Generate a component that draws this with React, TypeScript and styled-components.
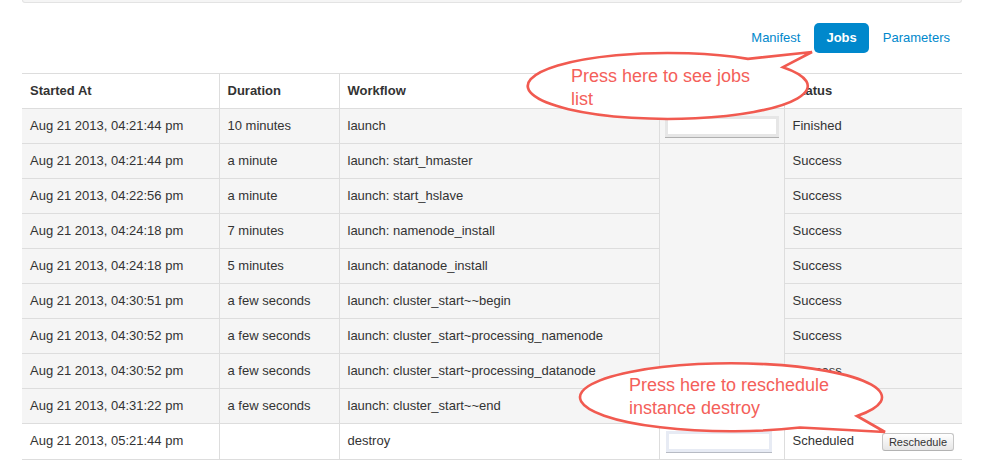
import styled, { createGlobalStyle } from "styled-components";

const GlobalStyle = createGlobalStyle`
  body {
    margin: 0;
    font-family: "Liberation Sans", Arial, sans-serif;
    font-size: 13px;
    color: #333333;
    background: #ffffff;
  }
`;

const Page = styled.div`
  position: relative;
  width: 986px;
  height: 468px;
  overflow: hidden;
`;

const Container = styled.div`
  width: 940px;
  margin-left: 22px;
`;

const Well = styled.div`
  height: 2px;
  background-color: #f5f5f5;
  border: 1px solid #e3e3e3;
  border-top: none;
  border-radius: 0 0 4px 4px;
`;

const Nav = styled.ul`
  display: flex;
  justify-content: flex-end;
  gap: 2px;
  list-style: none;
  margin: 20px 0 20px 0;
  padding: 0;
`;

const Pill = styled.li<{ $active?: boolean }>`
  padding: 6px 12px;
  line-height: 18px;
  border-radius: 5px;
  color: ${(p) => (p.$active ? "#ffffff" : "#0088cc")};
  background-color: ${(p) => (p.$active ? "#0088cc" : "transparent")};
  font-weight: ${(p) => (p.$active ? 700 : 400)};
  cursor: pointer;
`;

const Table = styled.table`
  width: 940px;
  table-layout: fixed;
  border-collapse: collapse;
  border-spacing: 0;
  border-bottom: 1px solid #dddddd;
`;

const Row = styled.tr<{ $shaded?: boolean }>`
  background-color: ${(p) => (p.$shaded ? "#f5f5f5" : "#ffffff")};
`;

const Th = styled.th`
  padding: 8px;
  line-height: 18px;
  text-align: left;
  font-weight: 700;
  border-top: 1px solid #dddddd;
  &:not(:first-child) {
    border-left: 1px solid #dddddd;
  }
`;

const Td = styled.td`
  padding: 8px;
  line-height: 18px;
  vertical-align: top;
  border-top: 1px solid #dddddd;
  white-space: nowrap;
  overflow: hidden;
  &:not(:first-child) {
    border-left: 1px solid #dddddd;
  }
`;

const ProgressCell = styled.td`
  padding: 7px 6px 5px 5px;
  vertical-align: top;
  border-top: 1px solid #dddddd;
  border-left: 1px solid #dddddd;
`;

const SpanCell = styled.td`
  border-top: 1px solid #dddddd;
  border-left: 1px solid #dddddd;
`;

const ProgressBox = styled.div<{ $tint?: "gray" | "blue" }>`
  box-sizing: border-box;
  width: ${(p) => (p.$tint === "blue" ? "106px" : "114px")};
  margin-left: ${(p) => (p.$tint === "blue" ? "1px" : "0")};
  height: 21px;
  background-color: #ffffff;
  border: 3px solid ${(p) => (p.$tint === "blue" ? "#e7ebf4" : "#e6e6e6")};
  box-shadow: 0 1px 0 ${(p) => (p.$tint === "blue" ? "#b7bbc4" : "#b0b0b0")};
`;

const RescheduleButton = styled.button`
  float: right;
  margin: 1px 0 0 0;
  padding: 2px 6px;
  font-family: "Liberation Sans", Arial, sans-serif;
  font-size: 11px;
  line-height: 12px;
  color: #333333;
  background: linear-gradient(#ffffff, #e6e6e6);
  border: 1px solid #c6c6c6;
  border-bottom-color: #b3b3b3;
  border-radius: 3px;
  box-shadow: inset 0 1px 0 rgba(255, 255, 255, 0.2);
  cursor: pointer;
`;

const Overlay = styled.svg`
  position: absolute;
  top: 0;
  left: 0;
  pointer-events: none;
`;

const CalloutText = styled.text`
  font-family: "Liberation Sans", Arial, sans-serif;
  font-size: 18px;
  fill: #f4605a;
`;

type Job = {
  started: string;
  duration: string;
  workflow: string;
  status: string;
};

const jobs: Job[] = [
  { started: "Aug 21 2013, 04:21:44 pm", duration: "a minute", workflow: "launch: start_hmaster", status: "Success" },
  { started: "Aug 21 2013, 04:22:56 pm", duration: "a minute", workflow: "launch: start_hslave", status: "Success" },
  { started: "Aug 21 2013, 04:24:18 pm", duration: "7 minutes", workflow: "launch: namenode_install", status: "Success" },
  { started: "Aug 21 2013, 04:24:18 pm", duration: "5 minutes", workflow: "launch: datanode_install", status: "Success" },
  { started: "Aug 21 2013, 04:30:51 pm", duration: "a few seconds", workflow: "launch: cluster_start~~begin", status: "Success" },
  { started: "Aug 21 2013, 04:30:52 pm", duration: "a few seconds", workflow: "launch: cluster_start~processing_namenode", status: "Success" },
  { started: "Aug 21 2013, 04:30:52 pm", duration: "a few seconds", workflow: "launch: cluster_start~processing_datanode", status: "Success" },
  { started: "Aug 21 2013, 04:31:22 pm", duration: "a few seconds", workflow: "launch: cluster_start~~end", status: "Success" },
];

function App() {
  return (
    <Page>
      <GlobalStyle />
      <Container>
        <Well />
        <Nav>
          <Pill>Manifest</Pill>
          <Pill $active>Jobs</Pill>
          <Pill>Parameters</Pill>
        </Nav>
        <Table>
          <colgroup>
            <col style={{ width: 197 }} />
            <col style={{ width: 120 }} />
            <col style={{ width: 320 }} />
            <col style={{ width: 125 }} />
            <col style={{ width: 178 }} />
          </colgroup>
          <thead>
            <Row>
              <Th>Started At</Th>
              <Th>Duration</Th>
              <Th>Workflow</Th>
              <Th></Th>
              <Th>Status</Th>
            </Row>
          </thead>
          <tbody>
            <Row $shaded>
              <Td>Aug 21 2013, 04:21:44 pm</Td>
              <Td>10 minutes</Td>
              <Td>launch</Td>
              <ProgressCell>
                <ProgressBox $tint="gray" />
              </ProgressCell>
              <Td>Finished</Td>
            </Row>
            {jobs.map((job, i) => (
              <Row $shaded key={i}>
                <Td>{job.started}</Td>
                <Td>{job.duration}</Td>
                <Td>{job.workflow}</Td>
                {i === 0 && <SpanCell rowSpan={jobs.length} />}
                <Td>{job.status}</Td>
              </Row>
            ))}
            <Row>
              <Td>Aug 21 2013, 05:21:44 pm</Td>
              <Td></Td>
              <Td>destroy</Td>
              <ProgressCell>
                <ProgressBox $tint="blue" />
              </ProgressCell>
              <Td>
                Scheduled
                <RescheduleButton>Reschedule</RescheduleButton>
              </Td>
            </Row>
          </tbody>
        </Table>
      </Container>

      <Overlay width={986} height={468} viewBox="0 0 986 468">
        <path
          d="M 783 67.2 L 812 52 L 748 58.9 A 140 33 0 1 0 783 67.2 Z"
          fill="#ffffff"
          stroke="#f15a50"
          strokeWidth={2.6}
          strokeLinejoin="miter"
        />
        <CalloutText x={571} y={82}>Press here to see jobs</CalloutText>
        <CalloutText x={571} y={105}>list</CalloutText>

        <path
          d="M 857 416 L 885 432 L 800 427.5 A 151 34 0 1 1 857 416 Z"
          fill="#ffffff"
          stroke="#f15a50"
          strokeWidth={2.6}
          strokeLinejoin="miter"
        />
        <CalloutText x={629} y={391}>Press here to reschedule</CalloutText>
        <CalloutText x={629} y={414}>instance destroy</CalloutText>
      </Overlay>
    </Page>
  );
}

export default App;
